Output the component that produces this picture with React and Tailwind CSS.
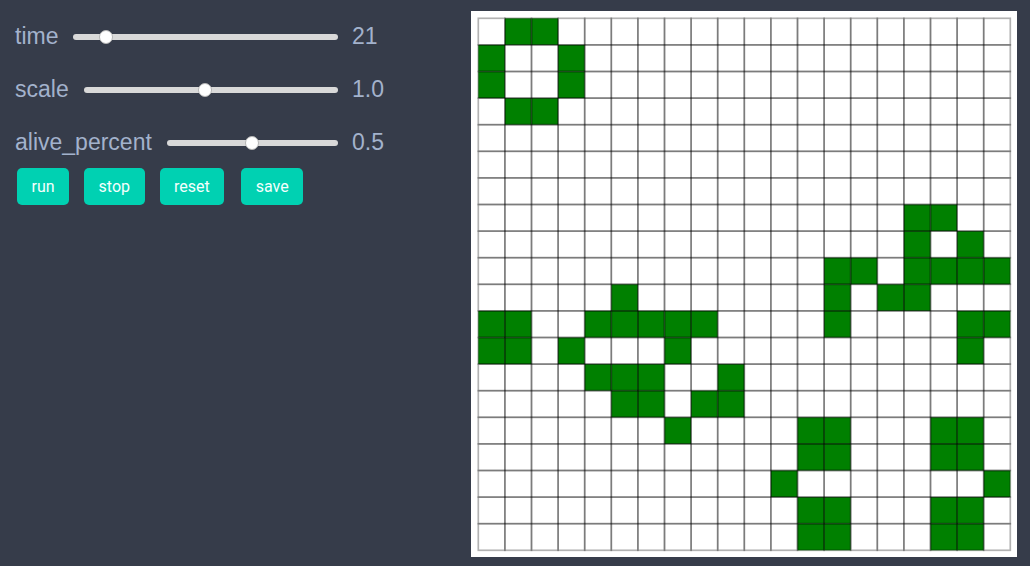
import { useState } from "react";

const N = 20;
const CELL = 26.6;
const OFF = 7.3;

// alive cells as [row, col]
const ALIVE = [
  [0, 1], [0, 2],
  [1, 0], [1, 3],
  [2, 0], [2, 3],
  [3, 1], [3, 2],
  [7, 16], [7, 17],
  [8, 16], [8, 18],
  [9, 13], [9, 14], [9, 16], [9, 17], [9, 18], [9, 19],
  [10, 5], [10, 13], [10, 15], [10, 16],
  [11, 0], [11, 1], [11, 4], [11, 5], [11, 6], [11, 7], [11, 8], [11, 13], [11, 18], [11, 19],
  [12, 0], [12, 1], [12, 3], [12, 7], [12, 18],
  [13, 4], [13, 5], [13, 6], [13, 9],
  [14, 5], [14, 6], [14, 8], [14, 9],
  [15, 7], [15, 12], [15, 13], [15, 17], [15, 18],
  [16, 12], [16, 13], [16, 17], [16, 18],
  [17, 11], [17, 19],
  [18, 12], [18, 13], [18, 17], [18, 18],
  [19, 12], [19, 13], [19, 17], [19, 18],
];

const SLIDERS = [
  { key: "time", value: "21", frac: 0.1 },
  { key: "scale", value: "1.0", frac: 0.475 },
  { key: "alive_percent", value: "0.5", frac: 0.5 },
];

function Slider({ frac }) {
  return (
    <div className="relative ml-[15px] flex h-[14px] flex-1 items-center">
      <div className="h-[6px] w-full rounded-full bg-[#d9d9d9]" />
      <div
        className="absolute top-0 h-[14px] w-[14px] rounded-full border border-[#b5b5b5] bg-white"
        style={{ left: `calc(${frac} * (100% - 14px))` }}
      />
    </div>
  );
}

function Board() {
  const alive = new Set(ALIVE.map(([r, c]) => r * N + c));
  const cells = [];
  for (let r = 0; r < N; r++) {
    for (let c = 0; c < N; c++) {
      cells.push({ r, c, on: alive.has(r * N + c) });
    }
  }
  return (
    <svg width="546" height="546" viewBox="0 0 546 546" className="block">
      <rect width="546" height="546" fill="#fff" />
      {cells
        .filter((x) => x.on)
        .map((x) => (
          <rect
            key={`f${x.r}-${x.c}`}
            x={OFF + x.c * CELL}
            y={OFF + x.r * CELL}
            width={CELL}
            height={CELL}
            fill="#008000"
          />
        ))}
      {cells.map((x) => (
        <rect
          key={`s${x.r}-${x.c}`}
          x={OFF + x.c * CELL}
          y={OFF + x.r * CELL}
          width={CELL}
          height={CELL}
          fill="none"
          stroke="rgba(0,0,0,0.3)"
          strokeWidth="1.7"
        />
      ))}
    </svg>
  );
}

export default function App() {
  const [running, setRunning] = useState(false);

  return (
    <div
      className="flex h-[566px] w-[1030px] bg-[#363c4a]"
      style={{ fontFamily: '"Liberation Sans", Arial, sans-serif' }}
    >
      <div className="w-[471px] pl-[15px] pt-[10px]">
        {SLIDERS.map((s) => (
          <div key={s.key} className="flex h-[53px] w-[397px] items-center text-[23px] text-[#a3b2cc]">
            <span>{s.key}</span>
            <Slider frac={s.frac} />
            <span className="ml-[14px] w-[60px]">{s.value}</span>
          </div>
        ))}
        <div
          className="-mt-px ml-[2px] flex gap-[15px] text-[16px] text-[#f4fffd]"
          style={{ fontFamily: "Roboto, sans-serif" }}
        >
          {["run", "stop", "reset", "save"].map((b) => (
            <button
              key={b}
              onClick={() => setRunning(b === "run" ? true : b === "stop" ? false : running)}
              className={`h-[37px] rounded-[5px] bg-[#00d1b2] px-[14.5px] ${b === "save" ? "ml-[2px]" : ""}`}
            >
              {b}
            </button>
          ))}
        </div>
      </div>
      <div className="pt-[11px]">
        <Board />
      </div>
    </div>
  );
}
